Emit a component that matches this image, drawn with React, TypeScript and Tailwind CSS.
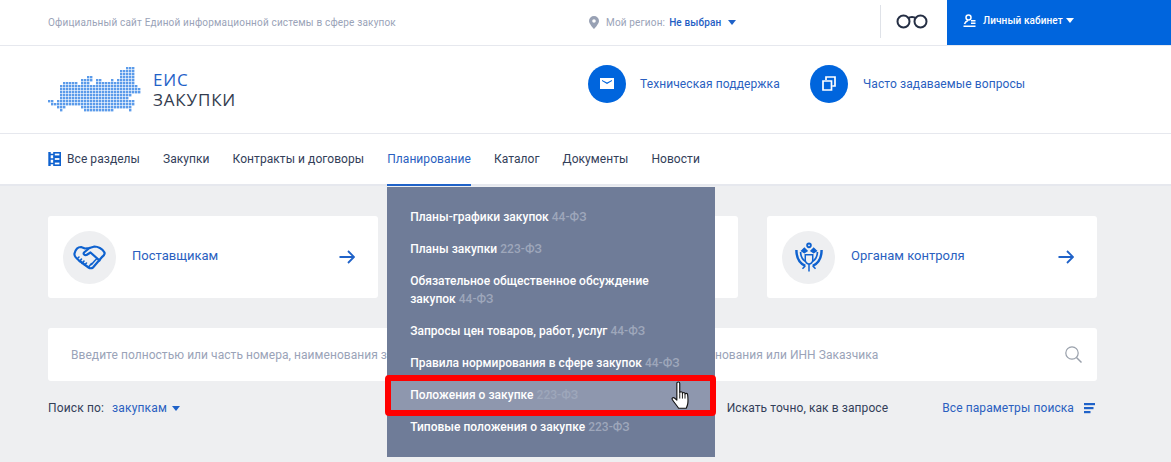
const NAV_ITEMS = ["Закупки", "Контракты и договоры"];
const NAV_AFTER = ["Каталог", "Документы", "Новости"];

const MENU = [
  { title: "Планы-графики закупок", law: "44-ФЗ" },
  { title: "Планы закупки", law: "223-ФЗ" },
  { title: "Обязательное общественное обсуждение закупок", law: "44-ФЗ" },
  { title: "Запросы цен товаров, работ, услуг", law: "44-ФЗ" },
  { title: "Правила нормирования в сфере закупок", law: "44-ФЗ" },
  { title: "Положения о закупке", law: "223-ФЗ", active: true },
  { title: "Типовые положения о закупке", law: "223-ФЗ" },
];

// map rows: y offset, then [from, to] column runs on a 3px grid
const MAP_ROWS: [number, [number, number][]][] = [
  [0, [[26, 28]]],
  [1, [[24, 28]]],
  [2, [[24, 28]]],
  [3, [[13, 14], [24, 28]]],
  [4, [[11, 14], [16, 17], [21, 21], [23, 28]]],
  [5, [[5, 9], [11, 13], [16, 28]]],
  [6, [[4, 29]]],
  [7, [[4, 29], [30, 30]]],
  [8, [[4, 30]]],
  [9, [[4, 27]]],
  [10, [[4, 26]]],
  [11, [[0, 1], [3, 28]]],
  [12, [[1, 2], [3, 28]]],
  [13, [[3, 5], [11, 27]]],
  [14, [[4, 4], [12, 21], [27, 27]]],
];

function MapLogo() {
  return (
    <svg width="93" height="45" viewBox="0 0 93 45" className="shrink-0">
      {MAP_ROWS.flatMap(([y, runs]) =>
        runs.flatMap(([from, to]) =>
          Array.from({ length: to - from + 1 }, (_, i) => (
            <rect key={`${y}-${from}-${i}`} x={(from + i) * 3} y={y * 3} width="2.4" height="2.4" fill="#5b9bea" />
          ))
        )
      )}
    </svg>
  );
}

function Caret({ color }: { color: string }) {
  return (
    <svg width="8" height="5" viewBox="0 0 8 5" className="shrink-0">
      <path d="M0 0h8L4 5z" fill={color} />
    </svg>
  );
}

function ArrowRight() {
  return (
    <svg width="16" height="14" viewBox="0 0 16 14" fill="none" stroke="#1f62c8" strokeWidth="1.8">
      <path d="M0.5 7h14M9 1l6 6-6 6" />
    </svg>
  );
}

function Handshake() {
  return (
    <svg width="33" height="25" viewBox="0 0 33 25" fill="none" stroke="#0f62cf" strokeWidth="2.2" strokeLinejoin="round" strokeLinecap="round">
      <path d="M1.5 8.5C2.5 4.5 5 2 8 2l4 1.5 4.5-.5 5-1.5c3 0 8 2 10 6 .5 1.5-.5 3-2.5 4.5L20 22.5c-1.5 1-3 1-4.5 0L6 15.5C3.500 13.500 1 11 1.500 8.500z" />
      <path d="M16.500 3l-5.500 4.500c-1 1.500.5 3 2.500 2.500l4-2.500 9 8" />
      <path d="M6 12l-1.500 1.500M8.500 14l-2 2.500M11 16l-2 2.500M13.500 18l-2 2M24 13.500l-3 3M21.500 16l-3 3.500M18.500 18.500l-2.500 3" strokeWidth="1.600" />
    </svg>
  );
}

function Emblem() {
  return (
    <svg width="28" height="31" viewBox="0 0 30 32" fill="none" stroke="#0f62cf" strokeWidth="2">
      <circle cx="15" cy="3" r="2" />
      <path d="M7 9l3-3 3 3-3 2zM17 9l3-3 3 3-3 2z" fill="#0f62cf" strokeWidth="1.4" />
      <path d="M1.500 8c0 9 3 14 9.500 17M28.500 8c0 9-3 14-9.500 17" strokeWidth="2.600" />
      <path d="M6 10c0 5 2 8 5 10M24 10c0 5-2 8-5 10" strokeWidth="1.800" />
      <path d="M11 13h8v6c0 2-2 4-4 4s-4-2-4-4z" strokeWidth="1.600" />
      <path d="M15 23v8M8 28l3-3M22 28l-3-3" strokeWidth="1.600" />
    </svg>
  );
}

function HandCursor() {
  return (
    <svg width="21" height="31" viewBox="0 0 20 30">
      <path
        d="M5.500 2.200c0-1.600 2.800-1.600 2.800 0v9.300c0-1.400 2.600-1.400 2.600 0v.6c0-1.300 2.500-1.300 2.500 0v.8c0-1.200 2.500-1.200 2.500.2.400 3 .5 6 .2 8.500-.3 2-.8 3.200-1.500 4.800H7.200C5.800 24 3 21 1.200 18.200c-.9-1.500.6-2.800 2-1.700l2.300 2z"
        fill="#fff"
        stroke="#111"
        strokeWidth="1.100"
        strokeLinejoin="round"
      />
      <path d="M8.300 12v5M10.900 12.500v4.500M13.400 13v4" stroke="#111" strokeWidth="0.900" />
    </svg>
  );
}

function RoundCard({ label, icon }: { label: string; icon: React.ReactNode }) {
  return (
    <div className="flex h-[82px] w-[330px] items-center rounded-[3px] bg-white pl-[15px] pr-[23px]">
      <div className="flex h-[53px] w-[53px] shrink-0 items-center justify-center rounded-full bg-[#eeeff1]">{icon}</div>
      <span className="ml-[16px] flex-1 pb-[2px] text-[13px] text-[#2a5fc0]">{label}</span>
      <ArrowRight />
    </div>
  );
}

export default function App() {
  return (
    <div className="h-[462px] w-[1171px] overflow-hidden bg-[#eeeff1] font-['Roboto',sans-serif] text-[#334059]">
      {/* top strip */}
      <div className="flex h-[46px] border-b border-[#e6e8ee] bg-white">
        <div className="flex w-[589px] items-center pb-[1px] pl-[48px] text-[10px] tracking-[0.17px] text-[#9aa3b8]">
          Официальный сайт Единой информационной системы в сфере закупок
        </div>
        <div className="flex w-[291px] items-center gap-[7px] pb-[1px] text-[10px] tracking-[0.15px]">
          <svg width="10" height="13" viewBox="0 0 10 13">
            <path fillRule="evenodd" d="M5 0a5 5 0 0 1 5 5c0 3-5 8-5 8S0 8 0 5a5 5 0 0 1 5-5zm0 3.200a1.800 1.800 0 1 0 0 3.600 1.800 1.800 0 0 0 0-3.600z" fill="#98a1b4" />
          </svg>
          <span className="text-[#9aa3b8]">Мой регион:</span>
          <span className="-ml-[3px] font-medium text-[#1f5ec4]">Не выбран</span>
          <Caret color="#1f62c8" />
        </div>
        <div className="my-[5px] h-[33px] w-px bg-[#dfe2e8]" />
        <div className="flex w-[66px] items-center justify-center pb-[3px] pr-[4px]">
          <svg width="32" height="16" viewBox="0 0 32 16" fill="none" stroke="#252f44" strokeWidth="2">
            <circle cx="7.500" cy="8.500" r="6" />
            <circle cx="24.500" cy="8.500" r="6" />
            <path d="M12 5.500c2-2 6-2 8 0" />
          </svg>
        </div>
        <div className="flex h-[45px] flex-1 items-center gap-[7px] bg-[#0065dd] pb-[5px] pl-[16px] text-[10px] font-medium tracking-[0.1px] text-white">
          <svg width="13" height="13" viewBox="0 0 13 13" fill="none" stroke="#fff" strokeWidth="1.500">
            <circle cx="5.500" cy="3.500" r="2.500" />
            <path d="M5 6.500C3.500 7 2 8.500 1.500 10M8 6.800h4.500M8 9.200h4.500M0.500 12.200h12" />
          </svg>
          <span className="flex items-center gap-[3px]">
            Личный кабинет
            <Caret color="#fff" />
          </span>
        </div>
      </div>

      {/* logo + contacts */}
      <div className="flex h-[88px] items-center border-b border-[#e6e8ee] bg-white pl-[48px]">
        <div className="flex w-[540px] items-center gap-[12px]">
          <MapLogo />
          <div className="font-['Open_Sans',sans-serif] text-[17px] leading-[20px] tracking-[0.85px]">
            <div className="text-[#1f62c8]">ЕИС</div>
            <div className="text-[#333c4e]">ЗАКУПКИ</div>
          </div>
        </div>
        <div className="mb-[12px] flex w-[222px] items-center gap-[14px]">
          <div className="flex h-[38px] w-[38px] items-center justify-center rounded-full bg-[#0065dd]">
            <svg width="14" height="11" viewBox="0 0 14 11">
              <path fillRule="evenodd" d="M0 0h14v11H0zM2 2v1l5 3 5-3V2L7 4.600z" fill="#fff" />
            </svg>
          </div>
          <span className="text-[12px] tracking-[0.1px] text-[#2a5fc0]">Техническая поддержка</span>
        </div>
        <div className="mb-[12px] flex items-center gap-[15px]">
          <div className="flex h-[38px] w-[38px] items-center justify-center rounded-full bg-[#0065dd]">
            <svg width="14" height="15" viewBox="0 0 14 15" fill="none" stroke="#fff" strokeWidth="1.700">
              <path d="M1 5h8.500v9H1zM4 4V1h9v9h-2.500" />
            </svg>
          </div>
          <span className="text-[12px] tracking-[0.1px] text-[#2a5fc0]">Часто задаваемые вопросы</span>
        </div>
      </div>

      {/* main nav */}
      <div className="flex h-[52px] items-stretch gap-[23px] border-b-2 border-[#e6e8ee] bg-white pl-[48px] text-[12px] tracking-[0.06px]">
        <div className="flex items-center gap-[6px]">
          <svg width="13" height="14" viewBox="0 0 13 14" fill="none" stroke="#0f62cf" strokeWidth="1.600">
            <path d="M1.500 0v14" strokeWidth="2.400" />
            <rect x="6" y="0.800" width="6.200" height="3.400" />
            <rect x="6" y="5.300" width="6.200" height="3.400" />
            <rect x="6" y="9.800" width="6.200" height="3.400" />
            <path d="M2 2.500h4M2 7h4M2 11.500h4" />
          </svg>
          Все разделы
        </div>
        {NAV_ITEMS.map((item) => (
          <div key={item} className="flex items-center">{item}</div>
        ))}
        <div className="relative flex items-center text-[#2a5fc0]">
          Планирование
          <div className="absolute bottom-[-2px] left-0 right-0 h-[2px] bg-[#1f62c8]" />
          <div className="absolute left-0 top-[53px] z-10 w-[328px] bg-[#6f7c98] pb-[14px] pt-[14px] text-[12px] font-medium leading-[18px] tracking-[0.02px] text-white">
            {MENU.map((m) => (
              <div key={m.title} className={`px-[23px] py-[7px] ${m.active ? "bg-[#8e97ae]" : ""}`}>
                {m.title} <span className="text-[#9ea7bb]">{m.law}</span>
              </div>
            ))}
            {/* red annotation frame */}
            <div className="absolute left-[-2px] top-[188px] h-[41px] w-[331px] rounded-[4px] border-[6px] border-[#ff0000]" />
            <div className="absolute left-[284px] top-[194px]"><HandCursor /></div>
          </div>
        </div>
        {NAV_AFTER.map((item) => (
          <div key={item} className="flex items-center">{item}</div>
        ))}
      </div>

      {/* role cards */}
      <div className="flex justify-between pl-[48px] pr-[74px] pt-[30px]">
        <RoundCard label="Поставщикам" icon={<Handshake />} />
        <RoundCard label="Заказчикам" icon={null} />
        <RoundCard label="Органам контроля" icon={<Emblem />} />
      </div>

      {/* search */}
      <div className="ml-[48px] mr-[74px] mt-[30px] flex h-[53px] items-center justify-between rounded-[3px] bg-white pl-[23px] pr-[15px]">
        <span className="whitespace-nowrap text-[12px] tracking-[0.05px] text-[#9aa3b8]">
          Введите полностью или часть номера, наименования закупки, ИНН продавца, идентификационного кода, наименования или ИНН Заказчика
        </span>
        <svg width="17" height="17" viewBox="0 0 17 17" fill="none" stroke="#99a0ab" strokeWidth="1.200">
          <circle cx="7" cy="7" r="6.200" />
          <path d="M11.500 11.500l5 5" strokeWidth="1.500" />
        </svg>
      </div>

      <div className="ml-[48px] mr-[76px] mt-[19px] flex items-center justify-between text-[12px] leading-[16px] tracking-[0.15px]">
        <div className="flex items-center">
          <span>Поиск по:</span>
          <span className="ml-[8px] text-[#2a5fc0]">закупкам</span>
          <span className="ml-[5px]"><Caret color="#1f62c8" /></span>
        </div>
        <div className="flex items-center">
          <span className="tracking-[0.09px]">Искать точно, как в запросе</span>
          <span className="ml-[54px] tracking-[0.1px] text-[#2a5fc0]">Все параметры поиска</span>
          <svg width="11" height="11" viewBox="0 0 11 11" className="ml-[10px]" fill="#1f62c8">
            <rect y="0" width="11" height="2.200" />
            <rect y="4" width="9.500" height="2.200" />
            <rect y="8" width="6.500" height="2.200" />
          </svg>
        </div>
      </div>
    </div>
  );
}
